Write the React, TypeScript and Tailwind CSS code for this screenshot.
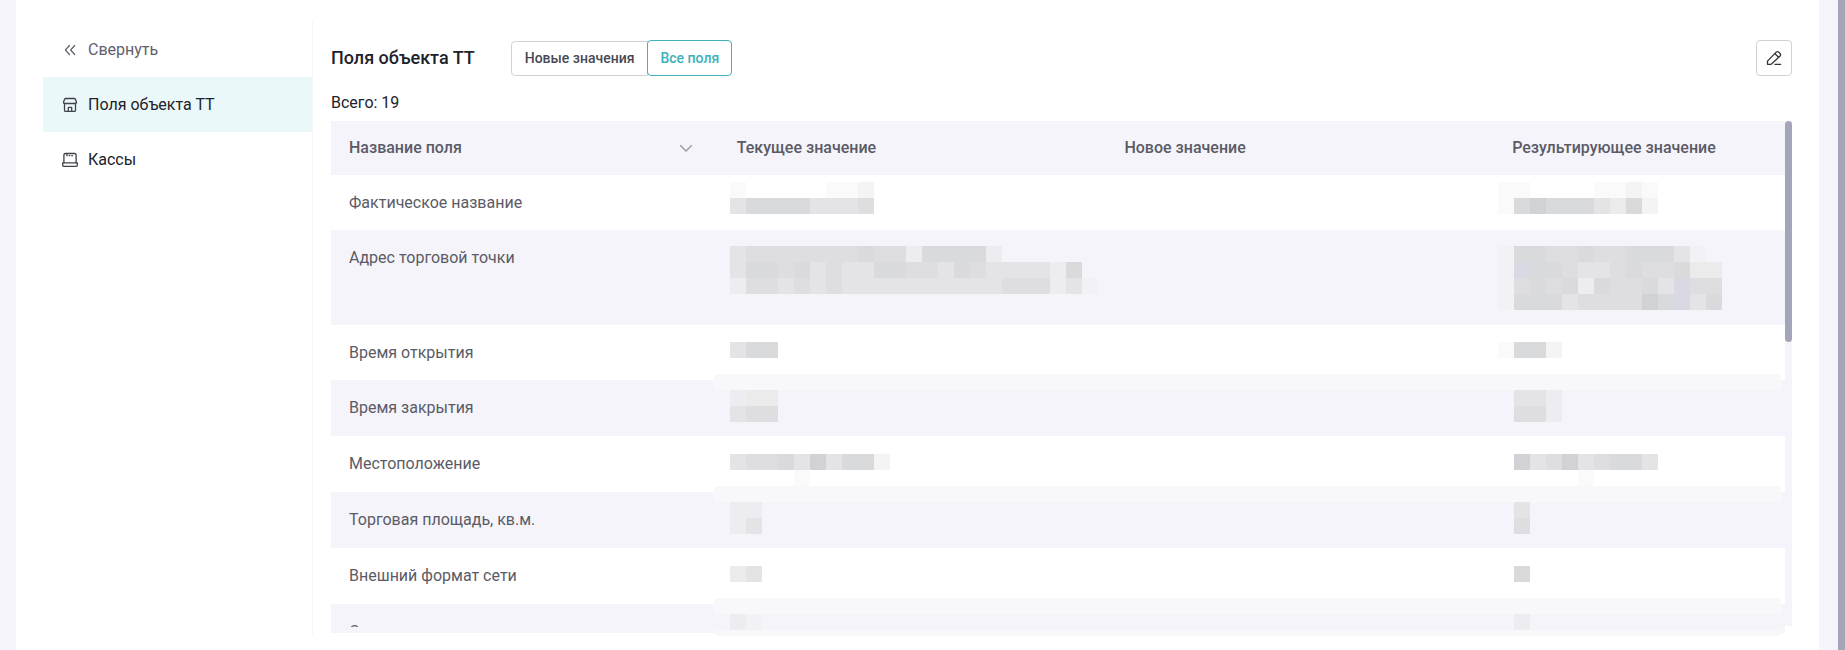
import { useState } from 'react';
import clsx from 'clsx';

type Mosaic = { x: number; y: number; cells: string[] };

type Field = {
  name: string;
  height: string;
  veil?: boolean;
  clipped?: boolean;
  current: Mosaic;
  result: Mosaic;
};

const CELL = 16;

const shades: Record<string, string> = {
  '1': '#fafafa',
  '2': '#f4f4f4',
  f: '#f1f1f6',
  l: '#ededf1',
  '3': '#ebebec',
  '4': '#e4e4e7',
  '5': '#dedee1',
  '6': '#d9dadc',
  '7': '#d1d2d5',
  b: '#d9d9e3',
};

const fields: Field[] = [
  {
    name: 'Фактическое название',
    height: 'h-[55px]',
    current: { x: 11, y: 7, cells: ['1.....112', '466664445'] },
    result: { x: 4, y: 7, cells: ['11....1121', '1676664362'] },
  },
  {
    name: 'Адрес торговой точки',
    height: 'h-[95px]',
    current: {
      x: 11,
      y: 16,
      cells: ['45555555655l6666l', '46656454466554654444l6', 'l5545454444444444555l4f'],
    },
    result: { x: 4, y: 16, cells: ['f66556556664f', 'fb665445655633', 'f5656l65564b55', 'f6664555576b46'] },
  },
  {
    name: 'Время открытия',
    height: 'h-[55px]',
    current: { x: 11, y: 17, cells: ['466'] },
    result: { x: 4, y: 17, cells: ['1662'] },
  },
  {
    name: 'Время закрытия',
    height: 'h-14',
    veil: true,
    current: { x: 11, y: 10, cells: ['l33', '455'] },
    result: { x: 4, y: 10, cells: ['.44l', '.55l'] },
  },
  {
    name: 'Местоположение',
    height: 'h-14',
    current: { x: 11, y: 18, cells: ['4556474662', '....1'] },
    result: { x: 4, y: 18, cells: ['.745745664', '.....1'] },
  },
  {
    name: 'Торговая площадь, кв.м.',
    height: 'h-14',
    veil: true,
    current: { x: 11, y: 10, cells: ['ll', 'l4'] },
    result: { x: 4, y: 10, cells: ['.4', '.5'] },
  },
  {
    name: 'Внешний формат сети',
    height: 'h-14',
    current: { x: 11, y: 18, cells: ['34'] },
    result: { x: 4, y: 18, cells: ['.6'] },
  },
  {
    name: 'С',
    height: 'h-[29px]',
    veil: true,
    clipped: true,
    current: { x: 11, y: 10, cells: ['lf'] },
    result: { x: 4, y: 10, cells: ['.l'] },
  },
];

function HiddenValue({ mosaic }: { mosaic: Mosaic }) {
  const width = mosaic.x + Math.max(...mosaic.cells.map(row => row.length)) * CELL;
  const height = mosaic.y + mosaic.cells.length * CELL;

  return (
    <svg width={width} height={height} className="block" shapeRendering="crispEdges" aria-hidden="true">
      {mosaic.cells.map((row, r) =>
        row.split('').map((c, i) =>
          shades[c] ? (
            <rect
              key={`${r}-${i}`}
              x={mosaic.x + i * CELL}
              y={mosaic.y + r * CELL}
              width={CELL}
              height={CELL}
              fill={shades[c]}
            />
          ) : null
        )
      )}
    </svg>
  );
}

const iconProps = {
  width: 16,
  height: 16,
  viewBox: '0 0 16 16',
  fill: 'none',
  stroke: 'currentColor',
  strokeWidth: 1.3,
  strokeLinecap: 'round' as const,
  strokeLinejoin: 'round' as const,
  'aria-hidden': true,
};

function CollapseIcon() {
  return (
    <svg {...iconProps} strokeWidth={1.2}>
      <path d="M7.5 3.5 3.4 8l4.1 4.5M12.7 3.5 8.6 8l4.1 4.5" />
    </svg>
  );
}

function ShopIcon() {
  return (
    <svg {...iconProps}>
      <path d="M3.7 1.5h8.6c.5 0 .8.2 1 .6l1.1 2.6v.9c0 .5-.4.9-.9.9h-11c-.5 0-.9-.4-.9-.9v-.9l1.1-2.6c.2-.4.5-.6 1-.6z" />
      <path d="M2.5 6.5v6.7c0 .7.4 1.2 1.1 1.2h8.8c.7 0 1.1-.5 1.1-1.2V6.5M6.3 14.2v-3.3c0-.4.2-.6.6-.6h2.2c.4 0 .6.2.6.6v3.3" />
    </svg>
  );
}

function RegisterIcon() {
  return (
    <svg {...iconProps}>
      <path d="M1.9 10.8V2.9c0-.9.5-1.4 1.4-1.4h9.4c.9 0 1.4.5 1.4 1.4v7.9" />
      <path d="M.7 10.8h14.6v2.5c0 .6-.4 1-1 1H1.7c-.6 0-1-.4-1-1z" />
      <path d="M5 1.8v1.9M7.2 3.7h.6M9.8 3.7h.6" />
    </svg>
  );
}

function PencilIcon() {
  return (
    <svg {...iconProps}>
      <path d="M1.5 14.3v-2.6c0-.5.1-.8.5-1.1l7.9-8.2a2.2 2.2 0 0 1 3.1 0l.8.8a2.2 2.2 0 0 1 0 3.1l-8 7.5c-.3.3-.6.5-1.1.5zM9 3.8l3.6 3.4M9 14.4h5.6" />
    </svg>
  );
}

const menu = [
  { id: 'fields', label: 'Поля объекта ТТ', Icon: ShopIcon },
  { id: 'registers', label: 'Кассы', Icon: RegisterIcon },
];

export default function App() {
  const [section, setSection] = useState('fields');
  const [mode, setMode] = useState<'new' | 'all'>('all');

  return (
    <div className="flex min-h-screen bg-[#f4f4fa] pl-4 font-['Roboto',sans-serif] text-base text-[#22222a]">
      <div className="flex flex-1 min-w-0 items-start bg-white px-[27px] pt-[22px] pb-4">
        <nav className="w-[270px] shrink-0 self-stretch border-r border-[#f4f4f8]">
          <button type="button" className="flex h-[55px] w-full items-center gap-2.5 pl-[19px] text-[#60606b] cursor-pointer">
            <CollapseIcon />
            Свернуть
          </button>
          {menu.map(({ id, label, Icon }) => (
            <button
              key={id}
              type="button"
              onClick={() => setSection(id)}
              className={clsx(
                'flex h-[55px] w-full items-center gap-2.5 pl-[19px] cursor-pointer',
                section === id && 'bg-[#eaf8f9]'
              )}
            >
              <span className="text-[#40404a]">
                <Icon />
              </span>
              {label}
            </button>
          ))}
        </nav>

        <main className="flex-1 min-w-0 pl-[18px] pt-[18px]">
          <div className="flex h-9 items-center">
            <h1 className="text-lg font-medium">Поля объекта ТТ</h1>
            <div className="ml-9 flex h-9 items-center text-sm font-medium">
              <button
                type="button"
                onClick={() => setMode('new')}
                className={clsx(
                  'rounded-l border px-[13px] cursor-pointer',
                  mode === 'new' ? 'h-9 border-[#3eb1bb] text-[#3eb1bb]' : 'h-[35px] border-[#d2d2d6] text-[#484852]'
                )}
              >
                Новые значения
              </button>
              <button
                type="button"
                onClick={() => setMode('all')}
                className={clsx(
                  '-ml-px rounded border px-3 cursor-pointer',
                  mode === 'all' ? 'h-9 border-[#3eb1bb] text-[#3eb1bb]' : 'h-[35px] border-[#d2d2d6] text-[#484852]'
                )}
              >
                Все поля
              </button>
            </div>
            <button
              type="button"
              aria-label="Редактировать"
              className="ml-auto flex size-9 items-center justify-center rounded border border-[#d2d2d6] text-[#33333b] cursor-pointer"
            >
              <PencilIcon />
            </button>
          </div>

          <p className="mt-[15px] mb-1.5">Всего: 19</p>

          <div className="flex">
            <table className="flex-1 w-full table-fixed border-collapse text-[#5b5b66]">
              <thead className="bg-[#f4f4fa]">
                <tr className="h-[54px] text-left">
                  <th className="w-4/15 px-[18px] font-medium">
                    <div className="flex items-center justify-between">
                      Название поля
                      <svg
                        width="14"
                        height="14"
                        viewBox="0 0 14 14"
                        fill="none"
                        stroke="#9a9aa6"
                        strokeWidth="1.4"
                        className="mr-2"
                        aria-hidden="true"
                      >
                        <path d="M1.2 4.2 7 10l5.8-5.8" />
                      </svg>
                    </div>
                  </th>
                  <th className="w-4/15 px-[18px] font-medium">Текущее значение</th>
                  <th className="w-4/15 px-[18px] font-medium">Новое значение</th>
                  <th className="px-[18px] font-medium">Результирующее значение</th>
                </tr>
              </thead>
              <tbody>
                {fields.map(field => (
                  <tr key={field.name} className={clsx('relative even:bg-[#f4f4fa]', field.height)}>
                    <td className="p-0 align-top">
                      <div className={clsx('px-[18px] pt-4', field.clipped && 'h-[23px] overflow-hidden')}>
                        {field.name}
                      </div>
                      {field.veil && (
                        <div className="absolute -top-1.5 left-[383px] right-1 h-4 rounded-t bg-[#f8f8fb]" />
                      )}
                      {field.clipped && (
                        <div className="absolute top-[26px] left-[383px] right-1 h-1.5 rounded-b bg-[#f8f8fb]" />
                      )}
                    </td>
                    <td className="p-0 align-top">
                      <HiddenValue mosaic={field.current} />
                    </td>
                    <td className="p-0" />
                    <td className="p-0 align-top">
                      <HiddenValue mosaic={field.result} />
                    </td>
                  </tr>
                ))}
              </tbody>
            </table>
            <div className="mb-[7px] w-[7px] shrink-0 bg-[#f4f4fa]">
              <div className="h-[221px] rounded-full bg-[#a5a5b9]" />
            </div>
          </div>
        </main>
      </div>
      <div className="ml-[19px] w-[7px] shrink-0 bg-[#a5a5b9]" />
    </div>
  );
}
